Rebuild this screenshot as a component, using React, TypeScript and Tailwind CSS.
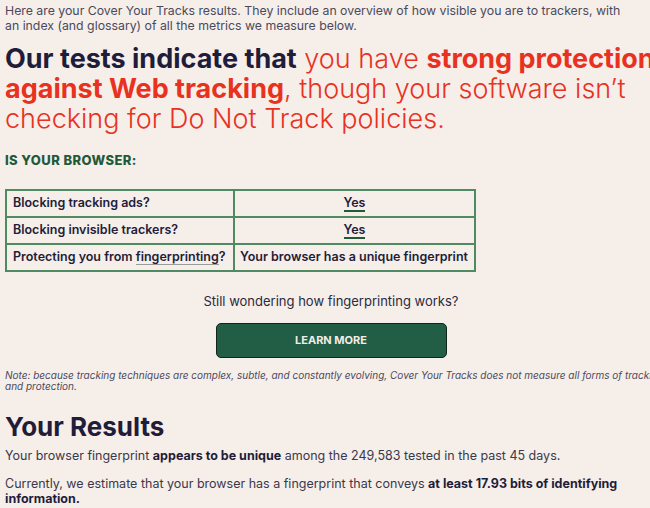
export default function App() {
  return (
    <div
      className="h-[508px] w-[650px] overflow-hidden bg-[#f6eee9] text-[#1f1d3a]"
      style={{ fontFamily: 'Inter, "Open Sans", sans-serif' }}
    >
      <div className="w-[657px] pl-[5px]">
        <p className="pt-[3px] text-[12.3px] leading-[15px] whitespace-nowrap text-[#4b4a5c]">
          Here are your Cover Your Tracks results. They include an overview of how visible you are to trackers, with
          <br />
          an index (and glossary) of all the metrics we measure below.
        </p>

        <h1 className="mt-[11px] w-[700px] text-[27px] leading-[30px] font-light text-[#e8321f]">
          <span className="font-bold text-[#1f1d3a]">Our tests indicate that</span> you have{' '}
          <strong className="font-bold">strong protection</strong>
          <br />
          <strong className="font-bold">against Web tracking</strong>, though your software isn’t
          <br />
          checking for Do Not Track policies.
        </h1>

        <p className="mt-[18px] text-[13px] leading-[16px] font-extrabold tracking-[0.03em] text-[#1f5a3a]">
          IS YOUR BROWSER:
        </p>

        <table className="mt-[21px] w-[471px] border-collapse text-[12.5px] font-semibold">
          <tbody>
            <tr className="h-[27px]">
              <td className="w-[228px] border-2 border-[#4f8a62] px-[6px]">Blocking tracking ads?</td>
              <td className="border-2 border-[#4f8a62] px-[6px] text-center">
                <span className="border-b-2 border-[#1f5a3a]">Yes</span>
              </td>
            </tr>
            <tr className="h-[27px]">
              <td className="border-2 border-[#4f8a62] px-[6px]">Blocking invisible trackers?</td>
              <td className="border-2 border-[#4f8a62] px-[6px] text-center">
                <span className="border-b-2 border-[#1f5a3a]">Yes</span>
              </td>
            </tr>
            <tr className="h-[27px]">
              <td className="border-2 border-[#4f8a62] px-[6px] whitespace-nowrap">
                Protecting you from{' '}
                <span className="border-b border-[#9a9a9a]">fingerprinting</span>?
              </td>
              <td className="border-2 border-[#4f8a62] px-[5px] whitespace-nowrap">
                Your browser has a unique fingerprint
              </td>
            </tr>
          </tbody>
        </table>

        <p className="mt-[21px] text-center text-[13px] leading-[16px] text-[#2b2a3d]">
          Still wondering how fingerprinting works?
        </p>

        <div className="mt-[14px] flex justify-center">
          <button
            type="button"
            className="h-[35px] w-[231px] rounded-[5px] border border-[#10241a] bg-[#215e45] text-[11px] font-bold text-[#f3ece6]"
          >
            LEARN MORE
          </button>
        </div>

        <p className="mt-[12px] text-[10px] leading-[11px] whitespace-nowrap italic text-[#4b4a5c]">
          Note: because tracking techniques are complex, subtle, and constantly evolving, Cover Your Tracks does not measure all forms of tracking
          <br />
          and protection.
        </p>

        <h2 className="mt-[20px] text-[26px] leading-[30px] font-bold text-[#1f1d3a]">Your Results</h2>

        <p className="mt-[6px] text-[12.5px] leading-[16px] text-[#3a394c]">
          Your browser fingerprint <strong className="font-bold text-[#1f1d3a]">appears to be unique</strong> among the
          249,583 tested in the past 45 days.
        </p>

        <p className="mt-[12px] text-[12.5px] leading-[15px] text-[#3a394c]">
          Currently, we estimate that your browser has a fingerprint that conveys{' '}
          <strong className="font-bold text-[#1f1d3a]">at least 17.93 bits of identifying</strong>
          <br />
          <strong className="font-bold text-[#1f1d3a]">information.</strong>
        </p>
      </div>
    </div>
  );
}
